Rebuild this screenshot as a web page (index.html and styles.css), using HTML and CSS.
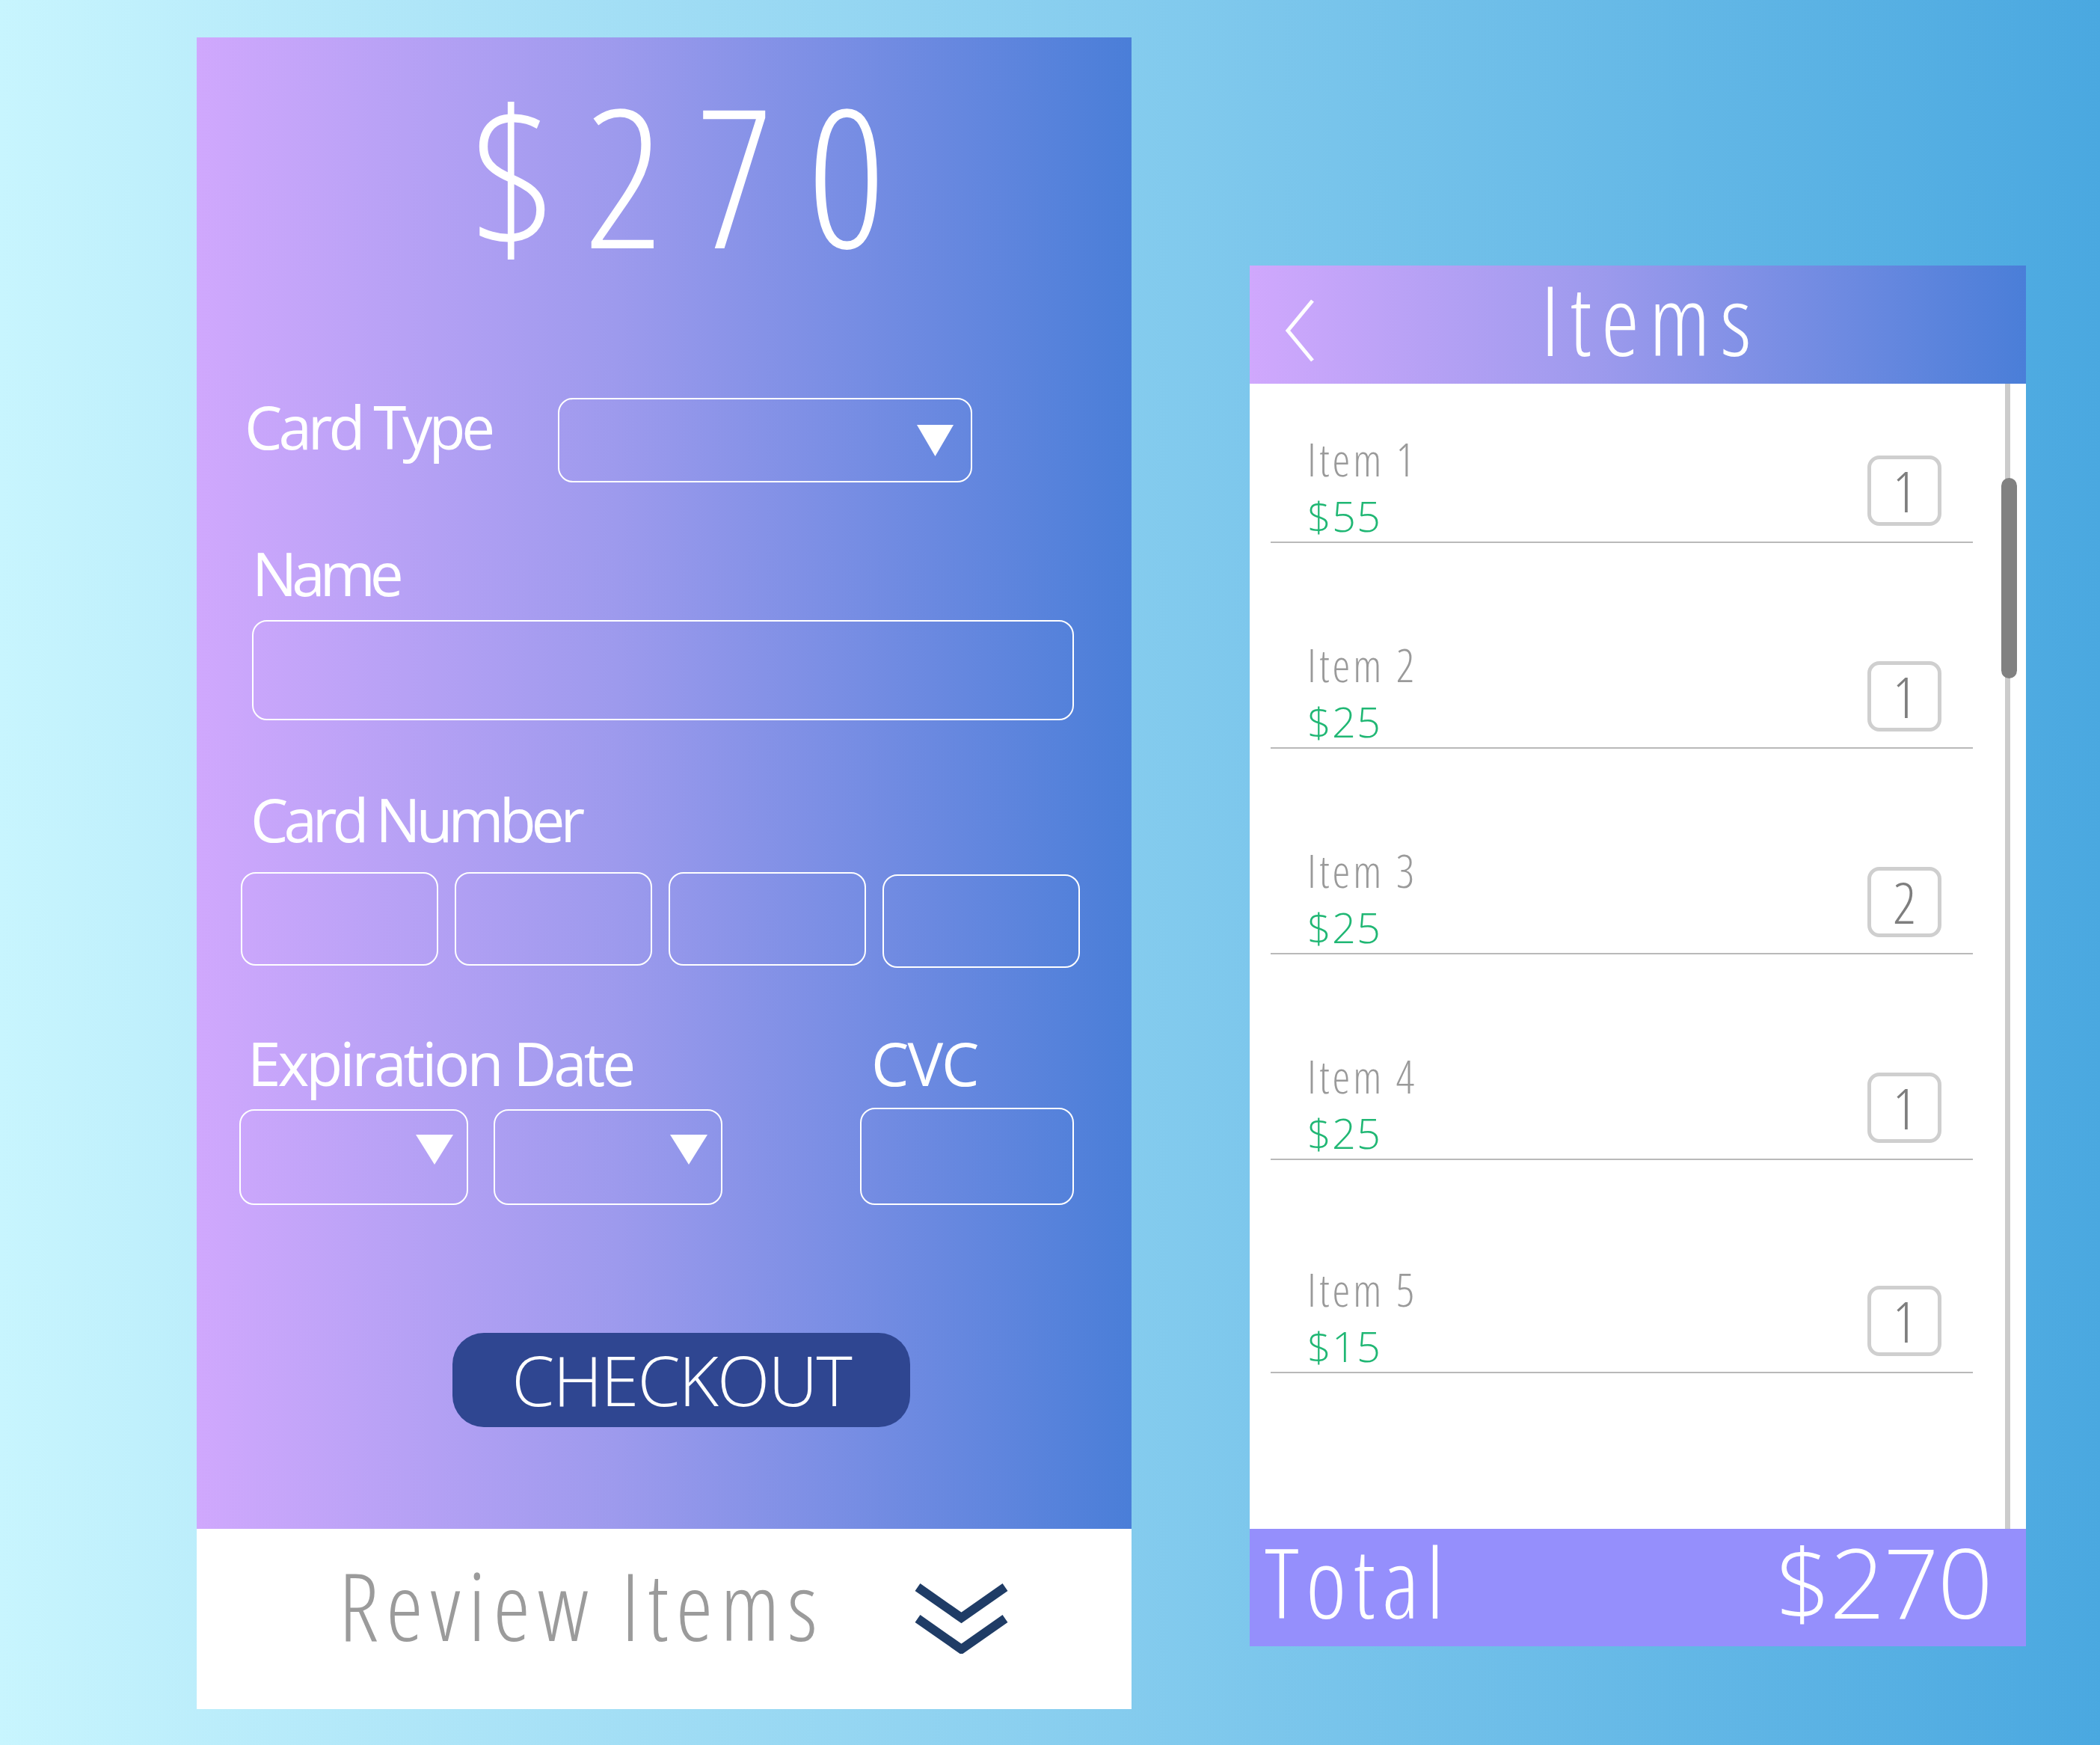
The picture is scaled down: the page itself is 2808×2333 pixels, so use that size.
FILE: index.html
```html
<!DOCTYPE html>
<html lang="en">
<head>
<meta charset="utf-8">
<title>Checkout</title>
<link rel="stylesheet" href="styles.css">
</head>
<body>
<div class="stage">
  <section class="pay">
    <div class="pay-main">
      <div class="amount">$270</div>
      <div class="type-row">
        <div class="label type-label">Card Type</div>
        <div class="field select select-type">
          <svg class="tri" width="49" height="42" viewBox="0 0 49 42"><polygon points="0,0 49,0 24.5,42"/></svg>
        </div>
      </div>
      <div class="label name-label">Name</div>
      <div class="field name-field"></div>
      <div class="label num-label">Card Number</div>
      <div class="num-row">
        <div class="field num"></div>
        <div class="field num"></div>
        <div class="field num"></div>
        <div class="field num num-last"></div>
      </div>
      <div class="exp-row">
        <div class="exp-col">
          <div class="label exp-label">Expiration Date</div>
          <div class="exp-selects">
            <div class="field select exp"><svg class="tri" width="50" height="40" viewBox="0 0 50 40"><polygon points="0,0 50,0 25,40"/></svg></div>
            <div class="field select exp"><svg class="tri" width="50" height="40" viewBox="0 0 50 40"><polygon points="0,0 50,0 25,40"/></svg></div>
          </div>
        </div>
        <div class="cvc-col">
          <div class="label cvc-label">CVC</div>
          <div class="field cvc"></div>
        </div>
      </div>
      <div class="checkout"><span>CHECKOUT</span></div>
    </div>
    <div class="review">
      <span class="review-text">Review Items</span>
      <svg class="chev2" width="131" height="97" viewBox="0 0 131 97"><path d="M7 8 L65.5 49 L124 8 M7 50 L65.5 91 L124 50"/></svg>
    </div>
  </section>
  <section class="items">
    <header class="items-head">
      <svg class="back" width="40" height="88" viewBox="0 0 40 88"><path d="M37 4 L4 44 L37 84"/></svg>
      <h1 class="items-title">Items</h1>
    </header>
    <div class="items-body">
      <ul class="item-list">
        <li class="item">
          <div class="item-info"><div class="item-name">Item 1</div><div class="item-price">$55</div></div>
          <div class="qty">1</div>
        </li>
        <li class="item">
          <div class="item-info"><div class="item-name">Item 2</div><div class="item-price">$25</div></div>
          <div class="qty">1</div>
        </li>
        <li class="item">
          <div class="item-info"><div class="item-name">Item 3</div><div class="item-price">$25</div></div>
          <div class="qty">2</div>
        </li>
        <li class="item">
          <div class="item-info"><div class="item-name">Item 4</div><div class="item-price">$25</div></div>
          <div class="qty">1</div>
        </li>
        <li class="item">
          <div class="item-info"><div class="item-name">Item 5</div><div class="item-price">$15</div></div>
          <div class="qty">1</div>
        </li>
      </ul>
      <div class="scroll">
        <div class="track"></div>
        <div class="thumb"></div>
      </div>
    </div>
    <footer class="total"><span class="total-label">Total</span><span class="total-value">$270</span></footer>
  </section>
</div>
</body>
</html>
```

FILE: styles.css
```css
html, body {
  margin: 0;
  padding: 0;
}
body {
  width: 2808px;
  height: 2333px;
  overflow: hidden;
  background: linear-gradient(90deg, #c8f5fe 0%, #4aa8e0 100%);
  font-family: "Open Sans", "Lato", sans-serif;
  color: #fff;
}
.stage {
  display: flex;
  align-items: flex-start;
  gap: 158px;
  padding: 50px 0 0 263px;
}

/* ---------- left payment panel ---------- */
.pay {
  width: 1250px;
  display: flex;
  flex-direction: column;
}
.pay-main {
  height: 1994px;
  box-sizing: border-box;
  background: linear-gradient(90deg, #d0a8fd 0%, #9d9aed 45%, #4a7ed8 100%);
  padding: 53px 0 0 64px;
  display: flex;
  flex-direction: column;
  align-items: flex-start;
}
.amount {
  height: 258px;
  font-size: 258px;
  line-height: 1;
  font-weight: 300;
  font-stretch: 75%;
  letter-spacing: 44px;
  margin-left: 305px;
  white-space: nowrap;
}
.label {
  font-size: 80px;
  line-height: 1;
  font-weight: 500;
  font-stretch: 90%;
  letter-spacing: -5px;
  white-space: nowrap;
}
.field {
  box-sizing: border-box;
  border: 2px solid #fff;
  border-radius: 20px;
}
.select {
  display: flex;
  justify-content: flex-end;
  align-items: center;
}
.tri polygon {
  fill: #fff;
}
.type-row {
  display: flex;
  align-items: flex-start;
  margin-top: 169px;
}
.type-label {
  width: 419px;
}
.select-type {
  width: 554px;
  height: 113px;
  margin-top: 2px;
  padding-right: 23px;
}
.name-label {
  margin-top: 81px;
  margin-left: 10px;
  letter-spacing: -7px;
}
.name-field {
  margin-top: 23px;
  margin-left: 10px;
  width: 1099px;
  height: 134px;
}
.num-label {
  margin-top: 92px;
  margin-left: 8px;
  letter-spacing: -6px;
}
.num-row {
  display: flex;
  gap: 22px;
  margin-top: 31px;
  margin-left: -5px;
}
.num {
  width: 264px;
  height: 125px;
}
.num-last {
  margin-top: 3px;
}
.exp-row {
  display: flex;
  margin-top: 87px;
  margin-left: -7px;
}
.exp-col {
  width: 830px;
}
.exp-label {
  margin-left: 11px;
  letter-spacing: -4px;
}
.exp-selects {
  display: flex;
  gap: 34px;
  margin-top: 22px;
}
.exp {
  width: 306px;
  height: 128px;
  align-items: flex-start;
  padding: 32px 18px 0 0;
}
.cvc-label {
  margin-left: 15px;
  letter-spacing: -2px;
}
.cvc {
  width: 286px;
  height: 130px;
  margin-top: 20px;
}
.checkout {
  margin-top: 171px;
  margin-left: 278px;
  width: 612px;
  height: 126px;
  border-radius: 42px;
  background: #2f4691;
  display: flex;
  justify-content: center;
  align-items: center;
  font-size: 92px;
  line-height: 1;
  font-weight: 300;
  font-stretch: 95%;
  letter-spacing: -2px;
}
.review {
  height: 241px;
  box-sizing: border-box;
  background: #fff;
  display: flex;
  align-items: flex-start;
  padding-left: 190px;
}
.review-text {
  width: 767px;
  margin-top: 39px;
  font-size: 125px;
  line-height: 1;
  font-weight: 300;
  font-stretch: 75%;
  letter-spacing: 10px;
  color: #9b9b9b;
  white-space: nowrap;
}
.chev2 {
  margin-top: 70px;
}
.chev2 path {
  fill: none;
  stroke: #1f3c66;
  stroke-width: 12;
  stroke-linejoin: miter;
}

/* ---------- right items panel ---------- */
.items {
  width: 1038px;
  margin-top: 305px;
  display: flex;
  flex-direction: column;
}
.items-head {
  height: 158px;
  box-sizing: border-box;
  background: linear-gradient(90deg, #d0a8fd 0%, #9d9aed 45%, #4a7ed8 100%);
  display: flex;
  align-items: flex-start;
}
.back {
  margin: 43px 0 0 47px;
}
.back path {
  fill: none;
  stroke: #fff;
  stroke-width: 5;
}
.items-title {
  margin: 7px 0 0 302px;
  font-size: 129px;
  line-height: 1;
  font-weight: 300;
  font-stretch: 75%;
  letter-spacing: 13px;
  white-space: nowrap;
}
.items-body {
  height: 1531px;
  background: #fff;
  display: flex;
}
.item-list {
  list-style: none;
  margin: 0;
  padding: 0 0 0 28px;
  width: 939px;
}
.item {
  display: flex;
  justify-content: space-between;
  align-items: flex-start;
  padding: 133px 42px 7px 49px;
  border-bottom: 2px solid #b9b9b9;
}
.item:first-child {
  padding-top: 71px;
}
.item:last-child {
  padding-top: 143px;
}
.item-name {
  font-size: 60px;
  line-height: 1;
  font-weight: 300;
  font-stretch: 75%;
  letter-spacing: 4px;
  color: #9a9a9a;
}
.item-price {
  margin-top: 17px;
  font-size: 56px;
  line-height: 1;
  font-weight: 300;
  letter-spacing: 1px;
  color: #20b774;
}
.qty {
  width: 99px;
  height: 94px;
  box-sizing: border-box;
  margin-top: 25px;
  border: 5px solid #cfcfcf;
  border-radius: 16px;
  display: flex;
  justify-content: center;
  align-items: center;
  font-size: 76px;
  line-height: 1;
  font-weight: 300;
  font-stretch: 75%;
  color: #7e7e7e;
}
.scroll {
  position: relative;
  width: 21px;
  margin-left: 38px;
}
.track {
  width: 7px;
  height: 100%;
  margin-left: 5px;
  background: #cccccc;
}
.thumb {
  position: absolute;
  left: 0;
  top: 126px;
  width: 21px;
  height: 268px;
  border-radius: 11px;
  background: #818181;
}
.total {
  height: 157px;
  box-sizing: border-box;
  background: #958ffc;
  display: flex;
  justify-content: space-between;
  align-items: flex-start;
  padding: 5px 46px 0 20px;
  font-size: 130px;
  line-height: 1;
  font-weight: 300;
}
.total-label {
  font-stretch: 75%;
  letter-spacing: 9px;
}
.total-value {
  font-stretch: 94%;
  letter-spacing: -2px;
}
```
